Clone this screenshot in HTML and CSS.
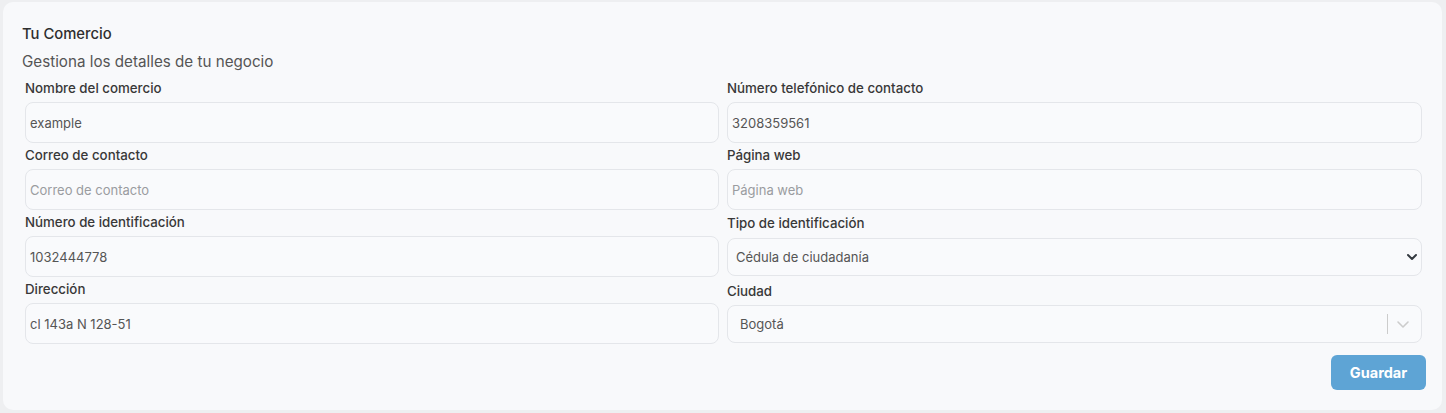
FILE: index.html
```html
<!DOCTYPE html>
<html lang="es">
<head>
<meta charset="utf-8">
<link rel="stylesheet" href="styles.css">
</head>
<body>
<div class="card">
  <h2 class="title">Tu Comercio</h2>
  <p class="subtitle">Gestiona los detalles de tu negocio</p>
  <div class="grid">
    <div class="col">
      <div class="field">
        <label class="label">Nombre del comercio</label>
        <div class="input">example</div>
      </div>
      <div class="field">
        <label class="label">Correo de contacto</label>
        <div class="input placeholder">Correo de contacto</div>
      </div>
      <div class="field">
        <label class="label">Número de identificación</label>
        <div class="input">1032444778</div>
      </div>
      <div class="field">
        <label class="label">Dirección</label>
        <div class="input">cl 143a N 128-51</div>
      </div>
    </div>
    <div class="col">
      <div class="field">
        <label class="label">Número telefónico de contacto</label>
        <div class="input">3208359561</div>
      </div>
      <div class="field">
        <label class="label">Página web</label>
        <div class="input placeholder">Página web</div>
      </div>
      <div class="field field-select">
        <label class="label">Tipo de identificación</label>
        <div class="select">
          <span>Cédula de ciudadanía</span>
          <svg class="chev" width="12" height="10" viewBox="0 0 12 10"><path d="M2 3l4 4 4-4" fill="none" stroke="#343a40" stroke-width="2" stroke-linecap="round" stroke-linejoin="round"/></svg>
        </div>
      </div>
      <div class="field">
        <label class="label">Ciudad</label>
        <div class="select rs">
          <span class="rs-value">Bogotá</span>
          <span class="rs-sep"></span>
          <svg class="rs-chev" width="20" height="20" viewBox="0 0 20 20"><path d="M5 8l5 5 5-5" fill="none" stroke="#cccccc" stroke-width="1.6" stroke-linecap="round" stroke-linejoin="round"/></svg>
        </div>
      </div>
    </div>
  </div>
  <div class="actions">
    <button class="btn">Guardar</button>
  </div>
</div>
</body>
</html>
```
FILE: styles.css
```css
html, body {
  margin: 0;
  padding: 0;
  background: #eeeff1;
}
body {
  font-family: Inter, "Open Sans", "Liberation Sans", sans-serif;
  color: #333;
  width: 1446px;
  height: 413px;
  overflow: hidden;
}
.card {
  margin: 2px 4px 0 3px;
  height: 408px;
  box-sizing: border-box;
  background: #f8f9fb;
  border-radius: 10px;
  padding: 22px 20px 0 19px;
}
.title {
  margin: 0;
  font-size: 14.8px;
  font-weight: 500;
  line-height: 20px;
  color: #2f2f2f;
}
.subtitle {
  margin: 8px 0 0;
  font-size: 15.2px;
  line-height: 20px;
  color: #555;
}
.grid {
  display: grid;
  grid-template-columns: 694px 695px;
  column-gap: 8px;
  margin: 7px 0 0 3px;
}
.col {
  display: flex;
  flex-direction: column;
  gap: 3px;
}
.field {
  display: flex;
  flex-direction: column;
}
.label {
  font-size: 13.3px;
  font-weight: 500;
  line-height: 19px;
  color: #383838;
  margin-bottom: 4px;
}
.field-select .label {
  margin-top: 1px;
}
.field-select .select {
  margin-top: 1px;
  margin-bottom: 3px;
}
.input {
  height: 41px;
  box-sizing: border-box;
  border: 1px solid #e4e6ea;
  border-radius: 8px;
  background: #f9fafc;
  padding: 0 4px;
  display: flex;
  align-items: center;
  font-size: 13px;
  color: #555;
}
.placeholder {
  color: #9a9ca0;
}
.select {
  height: 38px;
  box-sizing: border-box;
  border: 1px solid #e4e6ea;
  border-radius: 8px;
  background: #f9fafc;
  padding: 0 3px 0 8px;
  display: flex;
  align-items: center;
  justify-content: space-between;
  font-size: 13px;
  color: #555;
}
.rs {
  padding: 0 4px 0 12px;
  justify-content: flex-start;
}
.rs-value {
  flex: 1;
}
.rs-sep {
  width: 1px;
  height: 20px;
  background: #cccccc;
}
.rs-chev {
  margin: 0 4px 0 5px;
}
.actions {
  display: flex;
  justify-content: flex-end;
  margin-top: 11px;
}
.btn {
  width: 95px;
  height: 35px;
  margin-right: -4px;
  border: none;
  border-radius: 6px;
  background: #5ea4d5;
  color: #fff;
  font-family: Inter, "Open Sans", "Liberation Sans", sans-serif;
  font-weight: 700;
  font-size: 14.5px;
}
```
